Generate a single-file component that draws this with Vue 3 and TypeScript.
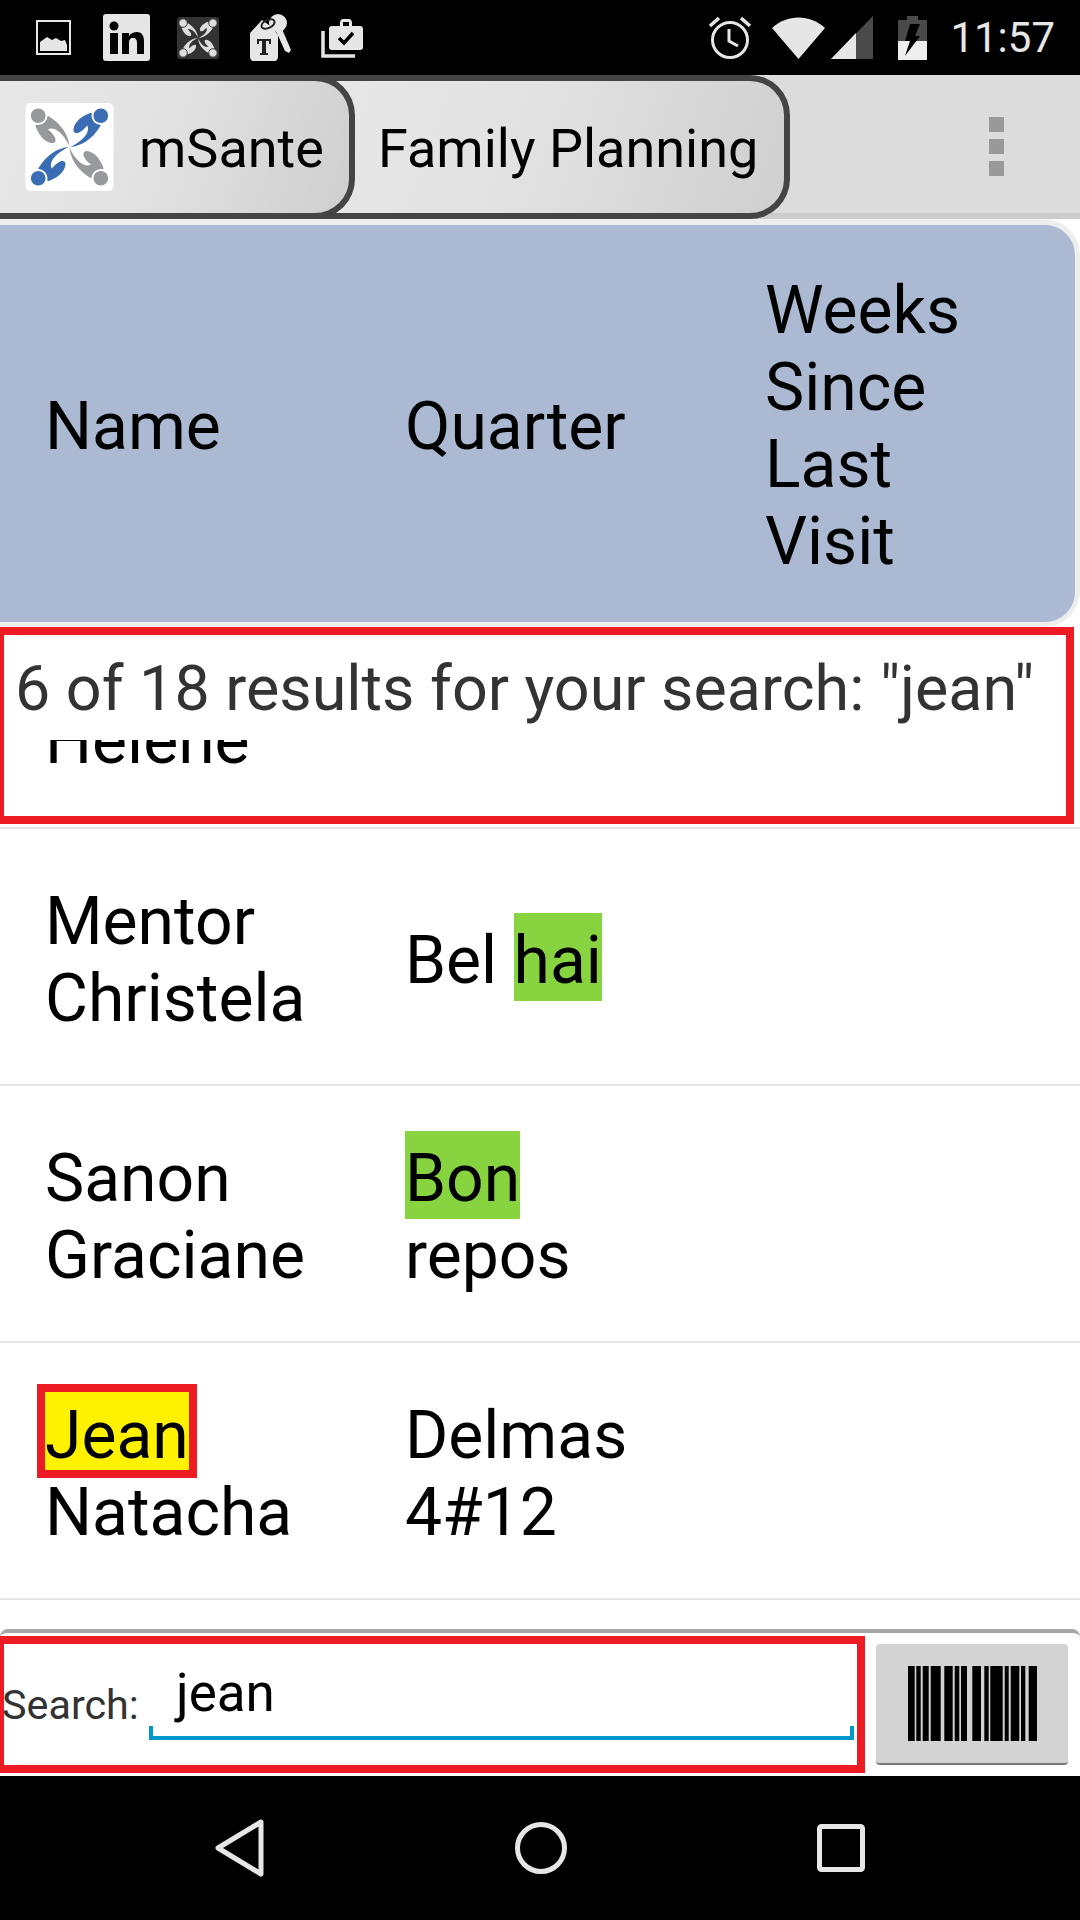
<template>
  <div class="screen">
    <div class="status-bar">
      <div class="status-left">
        <svg class="ic-image" viewBox="0 0 35 35">
          <rect x="1" y="1" width="33" height="33" fill="none" stroke="#e6e6e6" stroke-width="2" />
          <path d="M4 31V22L11 17L16 20L20 18L25 21L29 20L31 25V31Z" fill="#e6e6e6" />
        </svg>
        <svg class="ic-linkedin" viewBox="0 0 47 47">
          <rect width="47" height="47" rx="3" fill="#e6e6e6" />
          <circle cx="11" cy="12" r="4.5" fill="#000" />
          <rect x="7" y="19" width="8" height="21" fill="#000" />
          <path d="M19 19H26V22C28 19 31 18 34 18C39 18 41 22 41 27V40H34V29C34 26 33 24 30 24C27 24 26 26 26 29V40H19Z" fill="#000" />
        </svg>
        <svg class="ic-msante-small" viewBox="0 0 90 90">
          <rect width="90" height="90" rx="7" fill="#333" />
          <g v-for="a in arms" :key="a.angle" :transform="`rotate(${a.angle} 45 45)`">
            <path :d="armPath" fill="#ddd" />
            <circle cx="77" cy="13" r="9" fill="#ddd" stroke="#333" stroke-width="2" />
          </g>
        </svg>
        <svg class="ic-keys" viewBox="0 0 42 47">
          <circle cx="28" cy="9" r="9" fill="#e6e6e6" />
          <path d="M26 17L32 15L41 36L39 39L35 37Z" fill="#e6e6e6" />
          <path d="M0 19L12 6L23 14L28 21V42C28 45 27 47 24 47H4C1 47 0 45 0 42Z" fill="#e6e6e6" />
          <ellipse cx="18" cy="10" rx="7" ry="4" transform="rotate(-25 18 10)" fill="none" stroke="#222" stroke-width="2" />
          <path d="M7 25H21V30H19V27H16V39H18V41H10V39H12V27H9V30H7Z" fill="#222" />
        </svg>
        <svg class="ic-brief" viewBox="0 0 42 40">
          <path d="M2 12V37H34" fill="none" stroke="#e6e6e6" stroke-width="3.5" />
          <path d="M11 7C9 7 8 8 8 10V28C8 30 9 31 11 31H39C41 31 42 30 42 28V10C42 8 41 7 39 7H31V4C31 2 30 0 28 0H22C20 0 19 2 19 4V7ZM22 3H28V7H22Z" fill="#e6e6e6" fill-rule="evenodd" />
          <path d="M18 19L23 24L32 14" fill="none" stroke="#000" stroke-width="3.5" />
        </svg>
      </div>
      <div class="status-right">
        <svg class="ic-alarm" viewBox="0 0 42 43">
          <circle cx="21" cy="24" r="17.5" fill="none" stroke="#e6e6e6" stroke-width="3" />
          <path d="M20 13V25L29 30" fill="none" stroke="#e6e6e6" stroke-width="3" />
          <path d="M1 10L10 2M41 10L32 2" stroke="#e6e6e6" stroke-width="3.5" />
        </svg>
        <svg class="ic-wifi" viewBox="0 0 53 42">
          <path d="M0 11C15 -3 38 -3 53 11L26.5 42Z" fill="#e6e6e6" />
        </svg>
        <svg class="ic-signal" viewBox="0 0 42 43">
          <path d="M0 43L42 0V43Z" fill="#4a4a4a" />
          <path d="M0 43L25 17V43Z" fill="#e6e6e6" />
        </svg>
        <svg class="ic-battery" viewBox="0 0 29 44">
          <path d="M9 0H20V4H29V44H0V4H9Z" fill="#4a4a4a" />
          <path d="M0 25H29V44H0Z" fill="#eee" />
          <path d="M12 8H22L17 20H22L7 40L12 25H7Z" fill="#000" />
        </svg>
        <span class="time">11:57</span>
      </div>
    </div>

    <div class="app-bar">
      <div class="tab tab-first">
        <svg class="logo" viewBox="0 0 90 90">
          <rect width="90" height="90" rx="5" fill="#fff" />
          <g v-for="a in arms" :key="a.angle" :transform="`rotate(${a.angle} 45 45)`">
            <path :d="armPath" :fill="a.color" />
            <circle cx="77" cy="13" r="8.5" :fill="a.color" stroke="#fff" stroke-width="2" />
          </g>
        </svg>
        <span>mSante</span>
      </div>
      <div class="tab tab-second">Family Planning</div>
      <div class="menu-dots"><i></i><i></i><i></i></div>
    </div>

    <div class="head-ring">
      <div class="table-head">
        <div class="col-name">Name</div>
        <div class="col-quarter">Quarter</div>
        <div class="col-weeks">Weeks Since Last Visit</div>
      </div>
    </div>

    <div class="results">
      <div class="results-text">6 of 18 results for your search: "jean"</div>
      <div class="results-behind">Helene</div>
    </div>

    <div class="rows">
      <div class="row">
        <div class="col-name">Mentor Christela</div>
        <div class="col-quarter">Bel <span class="hit-green">hai</span></div>
      </div>
      <div class="row">
        <div class="col-name">Sanon Graciane</div>
        <div class="col-quarter"><span class="hit-green">Bon</span> repos</div>
      </div>
      <div class="row">
        <div class="col-name"><span class="hit-yellow">Jean</span> Natacha</div>
        <div class="col-quarter">Delmas 4#12</div>
      </div>
    </div>

    <div class="search-bar">
      <div class="search-box">
        <label class="search-label">Search:</label>
        <div class="search-input">jean</div>
      </div>
      <div class="scan-btn">
        <svg viewBox="0 0 129 75" width="129" height="75">
          <rect v-for="b in bars" :key="b.x" :x="b.x" y="0" :width="b.w" height="75" fill="#000" />
        </svg>
      </div>
    </div>

    <div class="nav-bar">
      <svg width="50" height="58" viewBox="0 0 50 58">
        <path d="M46 3L3 29L46 55Z" fill="none" stroke="#e6e6e6" stroke-width="5" stroke-linejoin="round" />
      </svg>
      <svg width="52" height="52" viewBox="0 0 52 52">
        <circle cx="26" cy="26" r="23.5" fill="none" stroke="#e6e6e6" stroke-width="5" />
      </svg>
      <svg width="48" height="48" viewBox="0 0 48 48">
        <rect x="2.5" y="2.5" width="43" height="43" rx="2" fill="none" stroke="#e6e6e6" stroke-width="5" />
      </svg>
    </div>
  </div>
</template>

<script setup lang="ts">
// one arm of the logo, the other three are the same path rotated round the centre
const armPath = 'M46 45C56 44 68 38 77 23L67 10C58 13 50 19 49 27C49 33 56 32 63 23C66 28 62 37 46 45Z'

const arms: { angle: number; color: string }[] = [
  { angle: 0, color: '#3b6db4' },
  { angle: 90, color: '#98999c' },
  { angle: 180, color: '#3b6db4' },
  { angle: 270, color: '#98999c' }
]

const bars: { x: number; w: number }[] = [
  [0, 6.7], [8.3, 4.4], [14.7, 6], [22.7, 10], [36.3, 8.4], [46.7, 4.6], [53, 6],
  [64.3, 8.7], [76.3, 4.4], [82.3, 12.4], [96.7, 4], [102.7, 8.6], [113, 4.3], [120.7, 8.3]
].map(([x, w]) => ({ x, w }))
</script>

<style scoped>
.screen {
  width: 1080px;
  height: 1920px;
  background: #fff;
  overflow: hidden;
  font-family: Roboto, "Liberation Sans", sans-serif;
  color: #000;
  display: flex;
  flex-direction: column;
}

.status-bar {
  height: 75px;
  background: #000;
  display: flex;
  justify-content: space-between;
  align-items: center;
  flex: none;
}

.status-left {
  display: flex;
  align-items: center;
  padding-left: 36px;
}

.status-right {
  display: flex;
  align-items: center;
  padding-right: 25px;
}

.ic-image { width: 35px; height: 35px; }
.ic-linkedin { width: 47px; height: 47px; margin-left: 32px; }
.ic-msante-small { width: 42px; height: 42px; margin-left: 27px; }
.ic-keys { width: 42px; height: 47px; margin-left: 31px; }
.ic-brief { width: 42px; height: 40px; margin-left: 29px; margin-top: 3px; }
.ic-alarm { width: 42px; height: 43px; }
.ic-wifi { width: 53px; height: 42px; margin-left: 21px; }
.ic-signal { width: 42px; height: 43px; margin-left: 6px; }
.ic-battery { width: 29px; height: 44px; margin-left: 25px; }

.time {
  font-size: 42px;
  color: #e6e6e6;
  margin-left: 23px;
  line-height: 44px;
}

.app-bar {
  height: 144px;
  flex: none;
  background: #dcdcdc;
  border-bottom: 6px solid #ccc;
  box-sizing: border-box;
  display: flex;
  align-items: flex-start;
  position: relative;
}

.tab {
  height: 144px;
  box-sizing: border-box;
  border: 6px solid #444;
  border-left: none;
  display: flex;
  align-items: center;
  font-size: 54px;
  background: linear-gradient(110deg, #e8e8e8 0%, #e2e2e2 45%, #cfcfcf 100%);
  border-radius: 0 40px 40px 0;
  flex: none;
}

.tab span,
.tab-second {
  line-height: 60px;
}

.tab span {
  padding-top: 4px;
}

.tab-first {
  position: relative;
  z-index: 1;
  width: 355px;
  padding-left: 25px;
  gap: 25px;
}

.tab-second {
  width: 475px;
  margin-left: -40px;
  padding: 4px 0 0 63px;
}

.logo {
  width: 89px;
  height: 88px;
  flex: none;
}

.menu-dots {
  position: absolute;
  left: 989px;
  top: 42px;
  display: flex;
  flex-direction: column;
  gap: 7px;
}

.menu-dots i {
  display: block;
  width: 15px;
  height: 15px;
  background: #999;
}

.head-ring {
  flex: none;
  height: 408px;
  box-sizing: border-box;
  padding: 6px 5px 5px 0;
  background: #eee;
  border-radius: 0 36px 36px 0;
}

.table-head {
  height: 397px;
  box-sizing: border-box;
  padding: 5px 0 0 45px;
  background: #abbad2;
  border-radius: 0 30px 30px 0;
  display: grid;
  grid-template-columns: 360px 360px 1fr;
  align-items: center;
  font-size: 66px;
  line-height: 77px;
}

.col-name {
  width: 310px;
}

.col-quarter {
  width: 290px;
}

.col-weeks {
  width: 250px;
}

.results {
  flex: none;
  height: 197px;
  width: 1078px;
  margin-left: -4px;
  box-sizing: border-box;
  border: 8px solid #ed1c24;
  overflow: hidden;
  background: #fff;
}

.results-text {
  position: relative;
  z-index: 1;
  height: 105px;
  box-sizing: border-box;
  background: #fff;
  padding: 14px 0 0 11px;
  font-size: 62.8px;
  line-height: 80px;
  color: #333;
  white-space: nowrap;
}

.results-behind {
  margin-top: -38px;
  padding-left: 41px;
  font-size: 66px;
  line-height: 77px;
}

.rows {
  flex: none;
  height: 802px;
  box-sizing: border-box;
  border-top: 2px solid #e5e5e5;
  margin-top: 3px;
}

.row {
  height: 257px;
  box-sizing: border-box;
  border-bottom: 2px solid #e5e5e5;
  display: grid;
  grid-template-columns: 360px 360px 1fr;
  align-items: center;
  padding: 7px 0 0 45px;
  font-size: 66px;
  line-height: 77px;
}

.hit-green {
  background: #88d440;
  padding: 9px 0 2px;
}

.hit-yellow {
  display: inline-block;
  height: 78px;
  margin-top: -5px;
  line-height: 87px;
  background: #fff200;
  outline: 8px solid #ed1c24;
}

.search-bar {
  flex: none;
  height: 147px;
  box-sizing: border-box;
  border-top: 4px solid #a6a6a6;
  border-radius: 8px 8px 0 0;
  display: flex;
  align-items: flex-start;
  padding-top: 3px;
}

.search-box {
  width: 869px;
  height: 137px;
  margin-left: -4px;
  box-sizing: border-box;
  border: 8px solid #ed1c24;
  display: flex;
  align-items: flex-end;
  padding-bottom: 25px;
  flex: none;
}

.search-label {
  width: 147px;
  margin: 0 0 10px -2px;
  flex: none;
  font-size: 41.3px;
  color: #333;
  line-height: 50px;
}

.search-input {
  width: 705px;
  height: 80px;
  padding: 3px 0 0 27px;
  box-sizing: border-box;
  font-size: 53px;
  line-height: 60px;
  background:
    linear-gradient(#09c, #09c) left bottom / 100% 4px no-repeat,
    linear-gradient(#09c, #09c) left bottom / 4px 14px no-repeat,
    linear-gradient(#09c, #09c) right bottom / 4px 14px no-repeat;
}

.scan-btn {
  width: 192px;
  height: 121px;
  margin: 8px 0 0 11px;
  background: #d3d3d3;
  border-bottom: 2px solid #777;
  border-radius: 4px;
  box-sizing: border-box;
  display: flex;
  align-items: center;
  justify-content: center;
  flex: none;
}

.nav-bar {
  flex: 1;
  background: #000;
  display: flex;
  justify-content: center;
  align-items: center;
  gap: 250px;
}
</style>

<style>
html, body { margin: 0; background: #fff; }
</style>
